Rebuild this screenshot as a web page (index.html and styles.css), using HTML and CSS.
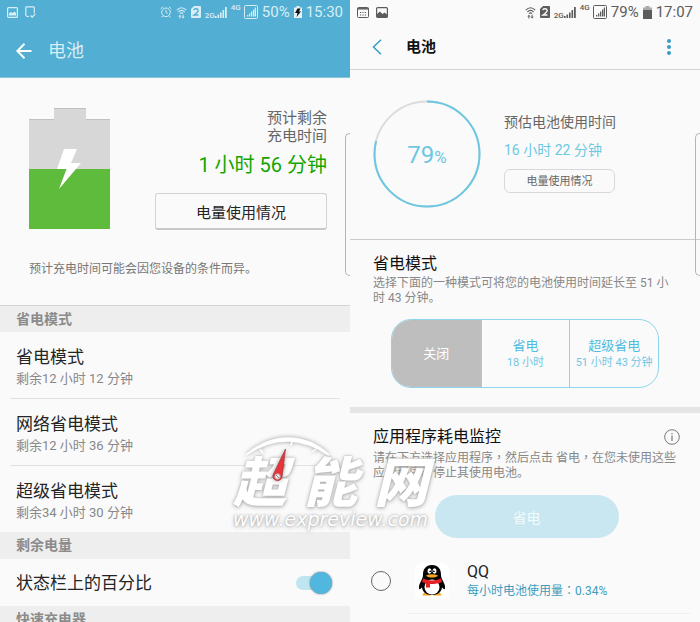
FILE: index.html
```html
<!DOCTYPE html>
<html lang="zh-CN">
<head>
<meta charset="utf-8">
<meta name="viewport" content="width=device-width, initial-scale=1">
<title>电池</title>
<link rel="stylesheet" href="styles.css">
</head>
<body>
<svg class="defs" aria-hidden="true">
  <symbol id="wifi" viewBox="0 0 11 13">
    <path d="M.8 4.2Q5.5-.6 10.2 4.2M2.4 6Q5.5 2.900 8.600 6M4 7.600Q5.500 6.200 7 7.600" fill="none" stroke="currentColor" stroke-width="1.100"/>
    <path d="M3.900 8.800l1.600 1.800H4.400V12.500h-1v-1.900H2.300zM7.100 12.500l-1.600-1.800h1.100V8.800h1v1.900h1.100z" fill="currentColor"/>
  </symbol>
  <symbol id="sim" viewBox="0 0 10 12">
    <path d="M3 0h6q1 0 1 1v10q0 1-1 1H1q-1 0-1-1V3z" fill="currentColor"/>
    <path d="M2.800 4.200Q3 2.800 5 2.800T7.200 4.500Q7.200 6 3 9H7.500" fill="none" stroke="var(--bar)" stroke-width="1.400"/>
  </symbol>
  <symbol id="signal" viewBox="0 0 12 11">
    <path d="M0 9h1.600v2H0zM2.500 7.500h1.600V11H2.500zM5 5.500h1.600V11H5zM7.500 3h1.600v8H7.500zM10 0h1.800v11H10z" fill="currentColor"/>
  </symbol>
  <symbol id="boxsignal" viewBox="0 0 14 14">
    <rect x=".5" y=".5" width="13" height="13" rx="1" fill="none" stroke="currentColor"/>
    <path d="M3 10h1.300v1.500H3zM5 8.500h1.300v3H5zM7 6.500h1.300v5H7zM9 4.500h1.300v7H9zM10.800 2.500H12v9h-1.200z" fill="currentColor"/>
  </symbol>
</svg>

<main class="screens">
  <section class="panel">
    <header class="top-blue">
      <div class="status">
        <div class="status-group notices">
          <svg width="11" height="11" viewBox="0 0 11 11"><rect x=".6" y=".6" width="9.800" height="9.800" rx="1" fill="none" stroke="currentColor" stroke-width="1.200"/><path d="M2 8.500V6.500l2-1.500 1.500 1 2-1.500L9 6v2.500z" fill="currentColor"/></svg>
          <svg width="11" height="12" viewBox="0 0 11 12"><path d="M4 10.500H2L.8 9V1.500L1.500.8h7l.8.7V7M5.500 9.500l1.700 1.700 3.200-3.500" fill="none" stroke="currentColor" stroke-width="1.200"/></svg>
        </div>
        <div class="status-group">
          <svg width="12" height="12" viewBox="0 0 12 12" fill="none" stroke="currentColor"><circle cx="6" cy="6.300" r="4.300"/><path d="M6 3.800v2.700l1.700.8M.7 2.800L3 .8M11.300 2.800L9 .8M2.800 9.800L1.600 11.300M9.200 9.800l1.200 1.500"/></svg>
          <svg width="11" height="13"><use href="#wifi"/></svg>
          <svg width="10" height="12"><use href="#sim"/></svg>
          <span class="net"><small class="low">2G</small><svg width="12" height="11"><use href="#signal"/></svg></span>
          <span class="net"><small class="high">4G</small><svg width="14" height="14"><use href="#boxsignal"/></svg></span>
          <span>50%</span>
          <svg width="8" height="12" viewBox="0 0 8 12"><path d="M2.500 0h3v1.500H8V12H0V1.500h2.500z" fill="#e4f1f7"/><path d="M3.500 2.500h3L5 5.500h2L2.500 11l1-4H1z" fill="#111"/></svg>
          <time>15:30</time>
        </div>
      </div>
      <div class="appbar">
        <button class="icon-btn" aria-label="返回"><svg width="16" height="16" viewBox="0 0 16 16"><path d="M15.500 8H1.500M8.500.8L1.300 8l7.200 7.200" fill="none" stroke="#fff" stroke-width="2"/></svg></button>
        <h1>电池</h1>
      </div>
    </header>

    <div class="charge">
      <div class="charge-main">
        <svg width="81" height="121" viewBox="0 0 81 121" role="img" aria-label="正在充电">
          <path d="M25 0h32v11h24v50H0V11h25z" fill="#d7d7d7"/>
          <path d="M0 11.500h25M25 .5h32M57 11.500h24" stroke="#c0c0c0"/>
          <path d="M0 61h81v60H0z" fill="#5ebb3c"/>
          <path d="M35 41h13l-6 14h10L30 81l7.500-20h-9.500z" fill="#fff"/>
        </svg>
        <div class="charge-info">
          <p class="charge-label">预计剩余<br>充电时间</p>
          <p class="charge-time">1 小时 56 分钟</p>
          <button class="usage-wide">电量使用情况</button>
        </div>
      </div>
      <p class="note">预计充电时间可能会因您设备的条件而异。</p>
    </div>

    <h2 class="band band-first">省电模式</h2>
    <ul class="rows">
      <li><a class="row" href="#saving"><b>省电模式</b><span>剩余12 小时 12 分钟</span></a></li>
      <li><a class="row" href="#network"><b>网络省电模式</b><span>剩余12 小时 36 分钟</span></a></li>
      <li><a class="row" href="#ultra"><b>超级省电模式</b><span>剩余34 小时 30 分钟</span></a></li>
    </ul>
    <h2 class="band">剩余电量</h2>
    <label class="switch-row"><span>状态栏上的百分比</span><input class="switch" type="checkbox" checked></label>
    <h2 class="band">快速充电器</h2>
    <i class="edge"></i>
  </section>

  <section class="panel">
    <header class="top-light">
      <div class="status">
        <div class="status-group notices">
          <svg width="12" height="11" viewBox="0 0 12 11"><rect x=".5" y=".5" width="11" height="10" rx="1" fill="none" stroke="currentColor"/><path d="M.5 1.800h11" stroke="currentColor" stroke-width="1.500"/><path d="M3 5.500h1.200M5.400 5.500h1.200M7.800 5.500H9M3 8h1.200M5.400 8h1.200M7.800 8H9" stroke="currentColor"/></svg>
          <svg width="12" height="11" viewBox="0 0 12 11"><rect x=".6" y=".6" width="10.800" height="9.800" rx="1" fill="none" stroke="currentColor" stroke-width="1.200"/><path d="M1 10V7l3-2.500L6.500 7 8.500 5.500 11 7.500V10z" fill="currentColor"/></svg>
        </div>
        <div class="status-group">
          <svg width="11" height="13"><use href="#wifi"/></svg>
          <svg width="10" height="12"><use href="#sim"/></svg>
          <span class="net"><small class="low">2G</small><svg width="12" height="11"><use href="#signal"/></svg></span>
          <span class="net"><small class="high">4G</small><svg width="14" height="14"><use href="#boxsignal"/></svg></span>
          <span>79%</span>
          <svg width="9" height="13" viewBox="0 0 9 13"><path d="M2.500 0h4v1.500H9V4H0V1.500h2.500z" fill="#aaa"/><path d="M0 4h9v9H0z" fill="currentColor"/></svg>
          <time>17:07</time>
        </div>
      </div>
      <div class="appbar">
        <button class="icon-btn" aria-label="返回"><svg width="10" height="16" viewBox="0 0 10 16"><path d="M9 .8L1.500 8 9 15.200" fill="none" stroke="#3a9cc4" stroke-width="1.500"/></svg></button>
        <h1>电池</h1>
        <button class="icon-btn more" aria-label="更多"><svg width="4" height="16" viewBox="0 0 4 16" fill="#3a9cc4"><circle cx="2" cy="2" r="2"/><circle cx="2" cy="8" r="2"/><circle cx="2" cy="14" r="2"/></svg></button>
      </div>
    </header>

    <div class="estimate">
      <div class="ring">
        <svg width="108" height="108" viewBox="0 0 108 108" aria-hidden="true"><circle cx="54" cy="54" r="52.500" fill="none" stroke="#dcdcdc" stroke-width="2"/><circle cx="54" cy="54" r="52.500" fill="none" stroke="#6cc8e2" stroke-width="2" pathLength="100" stroke-dasharray="79 21" transform="rotate(-90 54 54)"/></svg>
        <p>79<small>%</small></p>
      </div>
      <div class="estimate-info">
        <p>预估电池使用时间</p>
        <p class="remain">16 小时 22 分钟</p>
        <button class="usage-small">电量使用情况</button>
      </div>
    </div>

    <div class="modes">
      <h2>省电模式</h2>
      <p class="desc">选择下面的一种模式可将您的电池使用时间延长至 51 小时 43 分钟。</p>
      <div class="segments">
        <button class="off">关闭</button>
        <button><b>省电</b><span>18 小时</span></button>
        <button><b>超级省电</b><span>51 小时 43 分钟</span></button>
      </div>
    </div>

    <div class="monitor">
      <div class="monitor-head">
        <h2>应用程序耗电监控</h2>
        <button class="icon-btn" aria-label="信息"><svg width="16" height="16" viewBox="0 0 16 16"><circle cx="8" cy="8" r="7.300" fill="none" stroke="#777"/><path d="M8 6.500V12M8 4v1.300" stroke="#777" stroke-width="1.200"/></svg></button>
      </div>
      <p class="desc">请在下方选择应用程序<span class="punct" lang="zh-TW">，</span>然后点击 省电<span class="punct" lang="zh-TW">，</span>在您未使用这些应用程序时停止其使用电池。</p>
      <button class="save">省电</button>
    </div>

    <label class="app">
      <input type="radio" name="app">
      <svg width="34" height="36" viewBox="0 0 34 36" aria-hidden="true">
        <rect width="34" height="36" rx="6" fill="#fff"/>
        <path d="M8 31q1-2 5-1.500 4 1 3 3H8.500Q7 33 8 31zM26 31q-1-2-5-1.500-4 1-3 3h7.500q1.500.5.500-1.500z" fill="#f6a51c"/>
        <path d="M17 2C10.500 2 8 6.500 8 11.500c0 2-.4 3.500-1.500 5.500C5 20 3.500 22.500 4 25.500q.5 2 3-1C7.500 29 11 32 17 32s9.500-3 10-7.500q2.500 3 3 1c.5-3-1-5.500-2.500-8.500-1.100-2-1.500-3.500-1.500-5.500C26 6.500 23.500 2 17 2z" fill="#050505"/>
        <ellipse cx="17" cy="24" rx="7.500" ry="7.500" fill="#fff"/>
        <ellipse cx="14.500" cy="8" rx="2" ry="2.700" fill="#fff"/><ellipse cx="19.500" cy="8" rx="2" ry="2.700" fill="#fff"/>
        <circle cx="15.200" cy="8.300" r=".9"/><circle cx="18.900" cy="8.300" r=".9"/>
        <path d="M11 12.500q6-2.500 12 0-1.500 2-6 2T11 12.500z" fill="#f6a51c"/>
        <path d="M8 15.500q9 4 18 0l1 3.500q-4 2-12 2v3.500h-4v-4.500Q9 20 7 19z" fill="#e41f26"/>
      </svg>
      <span class="app-text"><b>QQ</b><span>每小时电池使用量<span class="punct" lang="zh-TW">：</span>0.34%</span></span>
    </label>
    <i class="edge"></i>
  </section>
</main>

<div class="watermark">
  <svg width="90" height="52" viewBox="0 0 90 52" aria-hidden="true">
    <path d="M1 21Q22 3 45 4t39 17Q64 8 45 7 22 6 1 21zM15 15l3 4M47 7l-1 5M71 15l-4 3" fill="#fff" stroke="#fff" stroke-width="1.500"/>
    <path d="M40.500 15L28 41a4.500 4.500 0 1 0 9 2z" fill="#e8353c" stroke="#9b2a2e" stroke-width=".6"/>
    <circle cx="32.500" cy="42.500" r="2.700" fill="#eee" stroke="#aaa"/><path d="M31 41l3 3" stroke="#888"/>
  </svg>
  <strong><span>超</span><span>能</span><span>网</span></strong>
  <em>www.expreview.com</em>
</div>
</body>
</html>
```
FILE: styles.css
```css
* { box-sizing: border-box; }

body {
  margin: 0;
  background: #fafafa;
  color: #252525;
  font-family: Roboto, "Noto Sans CJK SC", sans-serif;
  font-size: 12px;
}

h1, h2, p, ul { margin: 0; padding: 0; }
h1, h2, b { font-weight: 400; }
ul { list-style: none; }
svg { display: block; flex: none; }
a { color: inherit; text-decoration: none; }

button {
  padding: 0;
  border: 0;
  background: none;
  color: inherit;
  font: inherit;
}

.defs { position: absolute; width: 0; height: 0; }
.punct { font-family: "Noto Sans CJK TC", sans-serif; }

.screens {
  display: grid;
  grid-template-columns: 1fr 1fr;
  height: 100vh;
  overflow: hidden;
}

.panel {
  position: relative;
  min-width: 0;
  overflow: hidden;
}

.edge {
  position: absolute;
  top: 133px;
  right: 0;
  width: 5px;
  height: 143px;
  border: 1px solid #b5b5b5;
  border-right: 0;
  border-radius: 5px 0 0 5px;
}

/* Status and title bars */
.top-blue {
  --bar: #52afd3;
  height: 78px;
  border-bottom: 1px solid #8fc3d8;
  background: var(--bar);
  color: #d9edf5;
}

.top-light {
  --bar: #fafafa;
  height: 70px;
  border-bottom: 1px solid #d4d4d4;
  color: #5c5c5c;
}

.status {
  display: flex;
  justify-content: space-between;
  height: 24px;
  padding: 0 7px;
  font-size: 15px;
  line-height: 24px;
}

.status-group {
  display: flex;
  align-items: center;
  gap: 4px;
}

.notices { gap: 7px; }
.net { display: flex; align-items: center; height: 16px; }
.net small { font-size: 8px; font-weight: 500; line-height: 8px; }
.net .low { align-self: flex-end; }
.net .high { align-self: flex-start; padding-right: 3px; }

.appbar { display: flex; align-items: center; }
.top-blue .appbar { height: 54px; padding: 0 16px; gap: 16px; }
.top-blue h1 { font-size: 18px; line-height: 24px; }
.top-light .appbar { height: 45px; padding: 0 29px 0 22px; gap: 24px; }
.top-light h1 { color: #111; font-size: 15px; font-weight: 700; line-height: 24px; }
.more { margin-left: auto; }

/* Charging summary */
.charge {
  height: 227px;
  padding: 30px 23px 0 29px;
}

.charge-main { display: flex; justify-content: space-between; }

.charge-info {
  display: flex;
  flex-direction: column;
  align-items: flex-end;
  padding-top: 1px;
}

.charge-label { color: #666; font-size: 15px; line-height: 18px; }
.charge-time { margin: 6px 0 14px; color: #12a500; font-size: 20px; line-height: 28px; }

.usage-wide {
  width: 172px;
  height: 37px;
  border: 1px solid #d2d2d2;
  border-bottom: 2px solid #c8c8c8;
  border-radius: 3px;
  font-size: 15px;
}

.note { margin-top: 30px; color: #777; line-height: 18px; }

/* Settings list */
.band {
  height: 27px;
  padding: 0 16px;
  background: #eee;
  color: #8b8b8b;
  font-size: 14px;
  font-weight: 700;
  line-height: 27px;
}

.band-first { border-top: 1px solid #d4d4d4; }

.rows li { margin: 0 10px; }
.rows li + li { border-top: 1px solid #e2e2e2; }

.row {
  display: flex;
  flex-direction: column;
  height: 66px;
  padding: 13px 6px 0;
}

.row b, .switch-row { font-size: 17px; line-height: 24px; }
.row span { color: #888; font-size: 13px; line-height: 20px; }

.switch-row {
  display: flex;
  align-items: center;
  justify-content: space-between;
  height: 47px;
  padding: 0 19px 0 16px;
}

.switch {
  position: relative;
  appearance: none;
  width: 35px;
  height: 14px;
  margin: 0;
  border-radius: 7px;
  background: #bfe5f1;
}

.switch::before {
  content: "";
  position: absolute;
  top: -4px;
  right: -1px;
  width: 22px;
  height: 22px;
  border-radius: 50%;
  background: #52b7df;
  box-shadow: 0 0 2px #666;
}

/* Estimated usage */
.estimate {
  display: flex;
  gap: 23px;
  height: 170px;
  padding: 30px 23px 0;
  border-bottom: 1px solid #ccc;
}

.ring { display: grid; place-items: center; align-self: flex-start; }
.ring > * { grid-area: 1 / 1; }
.ring p { padding-top: 3px; color: #6cc8e2; font-size: 24px; line-height: 28px; }
.ring small { font-size: 17px; }

.estimate-info { padding-top: 10px; color: #666; font-size: 14px; line-height: 24px; }
.remain { margin: 4px 0 6px; color: #6cc8e2; }

.usage-small {
  width: 111px;
  height: 24px;
  border: 1px solid #d8d8d8;
  border-radius: 6px;
  font-size: 11px;
}

/* Power saving modes */
.modes {
  padding: 12px 23px 19px;
  border-bottom: 6px solid #e5e5e5;
}

.modes h2, .monitor h2 { color: #111; font-size: 16px; line-height: 24px; }
.desc { color: #888; line-height: 15px; }

.segments {
  display: grid;
  grid-template-columns: 1fr 1fr 1fr;
  height: 69px;
  margin: 13px 18px 0;
  overflow: hidden;
  border: 1px solid #8dd5ea;
  border-radius: 20px;
  color: #50bce0;
}

.segments button {
  display: flex;
  flex-direction: column;
  align-items: center;
  justify-content: center;
  font-size: 12px;
  line-height: 17px;
  white-space: nowrap;
}

.segments button + button { border-left: 1px solid #8dd5ea; }
.segments b { font-size: 13px; }
.segments span { color: #70c8e3; font-size: 11px; }
.segments .off { background: #bebebe; color: #fff; font-size: 13px; }

/* App power monitor */
.monitor { padding: 12px 20px 0 23px; }

.monitor-head {
  display: flex;
  align-items: center;
  justify-content: space-between;
}

.save {
  display: block;
  width: 184px;
  height: 43px;
  margin: 14px auto 0;
  border-radius: 22px;
  background: #c8e7f0;
  color: #f4fbfd;
  font-size: 14px;
}

.app {
  display: flex;
  align-items: center;
  height: 76px;
  margin: 0 10px 0 57px;
  padding-top: 11px;
  border-bottom: 1px solid #f0f0f0;
}

.app input {
  appearance: none;
  width: 20px;
  height: 20px;
  margin: 0 24px 0 -36px;
  border: 1px solid #666;
  border-radius: 50%;
}

.app-text {
  display: flex;
  flex-direction: column;
  margin-left: 18px;
  color: #3c9dbd;
  line-height: 18px;
}

.app b { color: #222; font-size: 16px; }

/* Site watermark laid over both screens */
.watermark {
  position: absolute;
  top: 434px;
  left: 233px;
  display: grid;
  color: #fff;
  pointer-events: none;
  text-shadow: 0 0 2px #aaa, 0 1px 4px #aaa;
}

.watermark > * { grid-column: 1; }

.watermark svg {
  z-index: 1;
  grid-row: 1 / 3;
  margin-left: 12px;
  filter: drop-shadow(0 0 2px #999);
}

.watermark strong {
  display: flex;
  justify-content: space-between;
  grid-row: 1;
  padding-top: 26px;
  font-size: 54px;
  font-style: italic;
  font-weight: 900;
  line-height: 48px;
}

.watermark em {
  grid-row: 2;
  font-family: "DejaVu Sans", sans-serif;
  font-size: 19px;
  line-height: 22px;
}
```
